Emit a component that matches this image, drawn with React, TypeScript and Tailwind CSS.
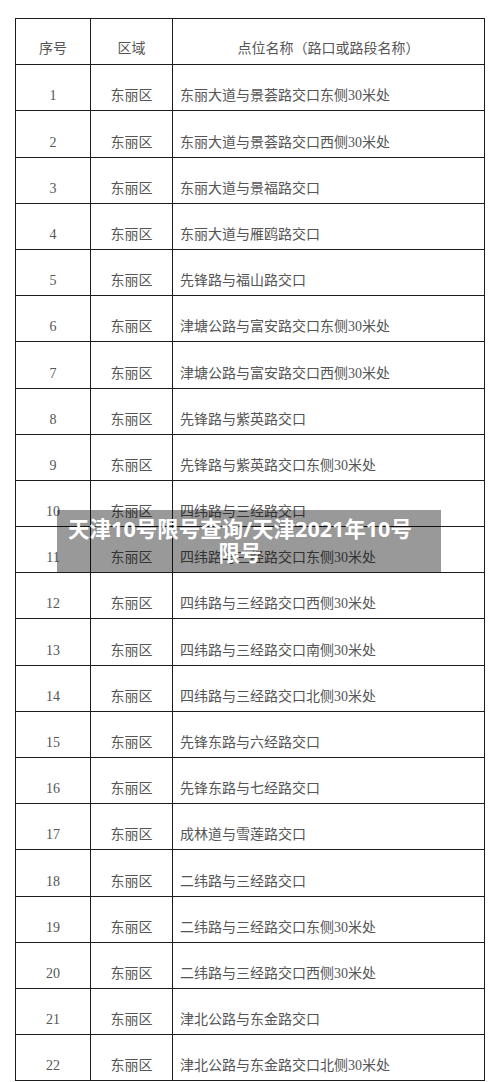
import React from "react"

const rows: [string, string][] = [
  ["1", "东丽大道与景荟路交口东侧30米处"],
  ["2", "东丽大道与景荟路交口西侧30米处"],
  ["3", "东丽大道与景福路交口"],
  ["4", "东丽大道与雁鸥路交口"],
  ["5", "先锋路与福山路交口"],
  ["6", "津塘公路与富安路交口东侧30米处"],
  ["7", "津塘公路与富安路交口西侧30米处"],
  ["8", "先锋路与紫英路交口"],
  ["9", "先锋路与紫英路交口东侧30米处"],
  ["10", "四纬路与三经路交口"],
  ["11", "四纬路与三经路交口东侧30米处"],
  ["12", "四纬路与三经路交口西侧30米处"],
  ["13", "四纬路与三经路交口南侧30米处"],
  ["14", "四纬路与三经路交口北侧30米处"],
  ["15", "先锋东路与六经路交口"],
  ["16", "先锋东路与七经路交口"],
  ["17", "成林道与雪莲路交口"],
  ["18", "二纬路与三经路交口"],
  ["19", "二纬路与三经路交口东侧30米处"],
  ["20", "二纬路与三经路交口西侧30米处"],
  ["21", "津北公路与东金路交口"],
  ["22", "津北公路与东金路交口北侧30米处"],
]

const font = { fontFamily: '"Liberation Serif", "Noto Sans CJK SC", serif' }

export default function App() {
  return (
    <div className="relative w-[500px] h-[1082px] bg-white overflow-hidden">
      <div className="pt-[18px] pl-[15px]">
        {/* 表格 */}
        <div
          className="w-[470px] border-[1.5px] border-b-0 border-[#1c1c1c] text-[14px] text-[#555]"
          style={font}
        >
          <div className="grid grid-cols-[75px_82px_1fr] h-[46.2px] border-b-[1.5px] border-[#1c1c1c]">
            <div className="flex items-end justify-center pb-[5px] border-r-[1.5px] border-[#1c1c1c]">序号</div>
            <div className="flex items-end justify-center pb-[5px] border-r-[1.5px] border-[#1c1c1c]">区域</div>
            <div className="flex items-end justify-center pb-[5px]">点位名称（路口或路段名称）</div>
          </div>
          {rows.map(([no, name]) => (
            <div
              key={no}
              className="grid grid-cols-[75px_82px_1fr] h-[46.2px] border-b-[1.5px] border-[#1c1c1c]"
            >
              <div className="flex items-end justify-center pb-[4px] border-r-[1.5px] border-[#1c1c1c]">{no}</div>
              <div className="flex items-end justify-center pb-[4px] border-r-[1.5px] border-[#1c1c1c]">东丽区</div>
              <div className="flex items-end pl-[7px] pb-[4px]">{name}</div>
            </div>
          ))}
        </div>
      </div>

      {/* 标题遮罩 */}
      <div
        className="absolute top-[510px] left-[57px] w-[384px] h-[62px] bg-black/40 flex items-center justify-center pl-[8px] pr-[26px] text-center text-white font-bold text-[21.5px] leading-[24px]"
        style={{ fontFamily: '"Noto Sans", "Noto Sans CJK SC", sans-serif' }}
      >
        天津10号限号查询/天津2021年10号限号
      </div>
    </div>
  )
}
